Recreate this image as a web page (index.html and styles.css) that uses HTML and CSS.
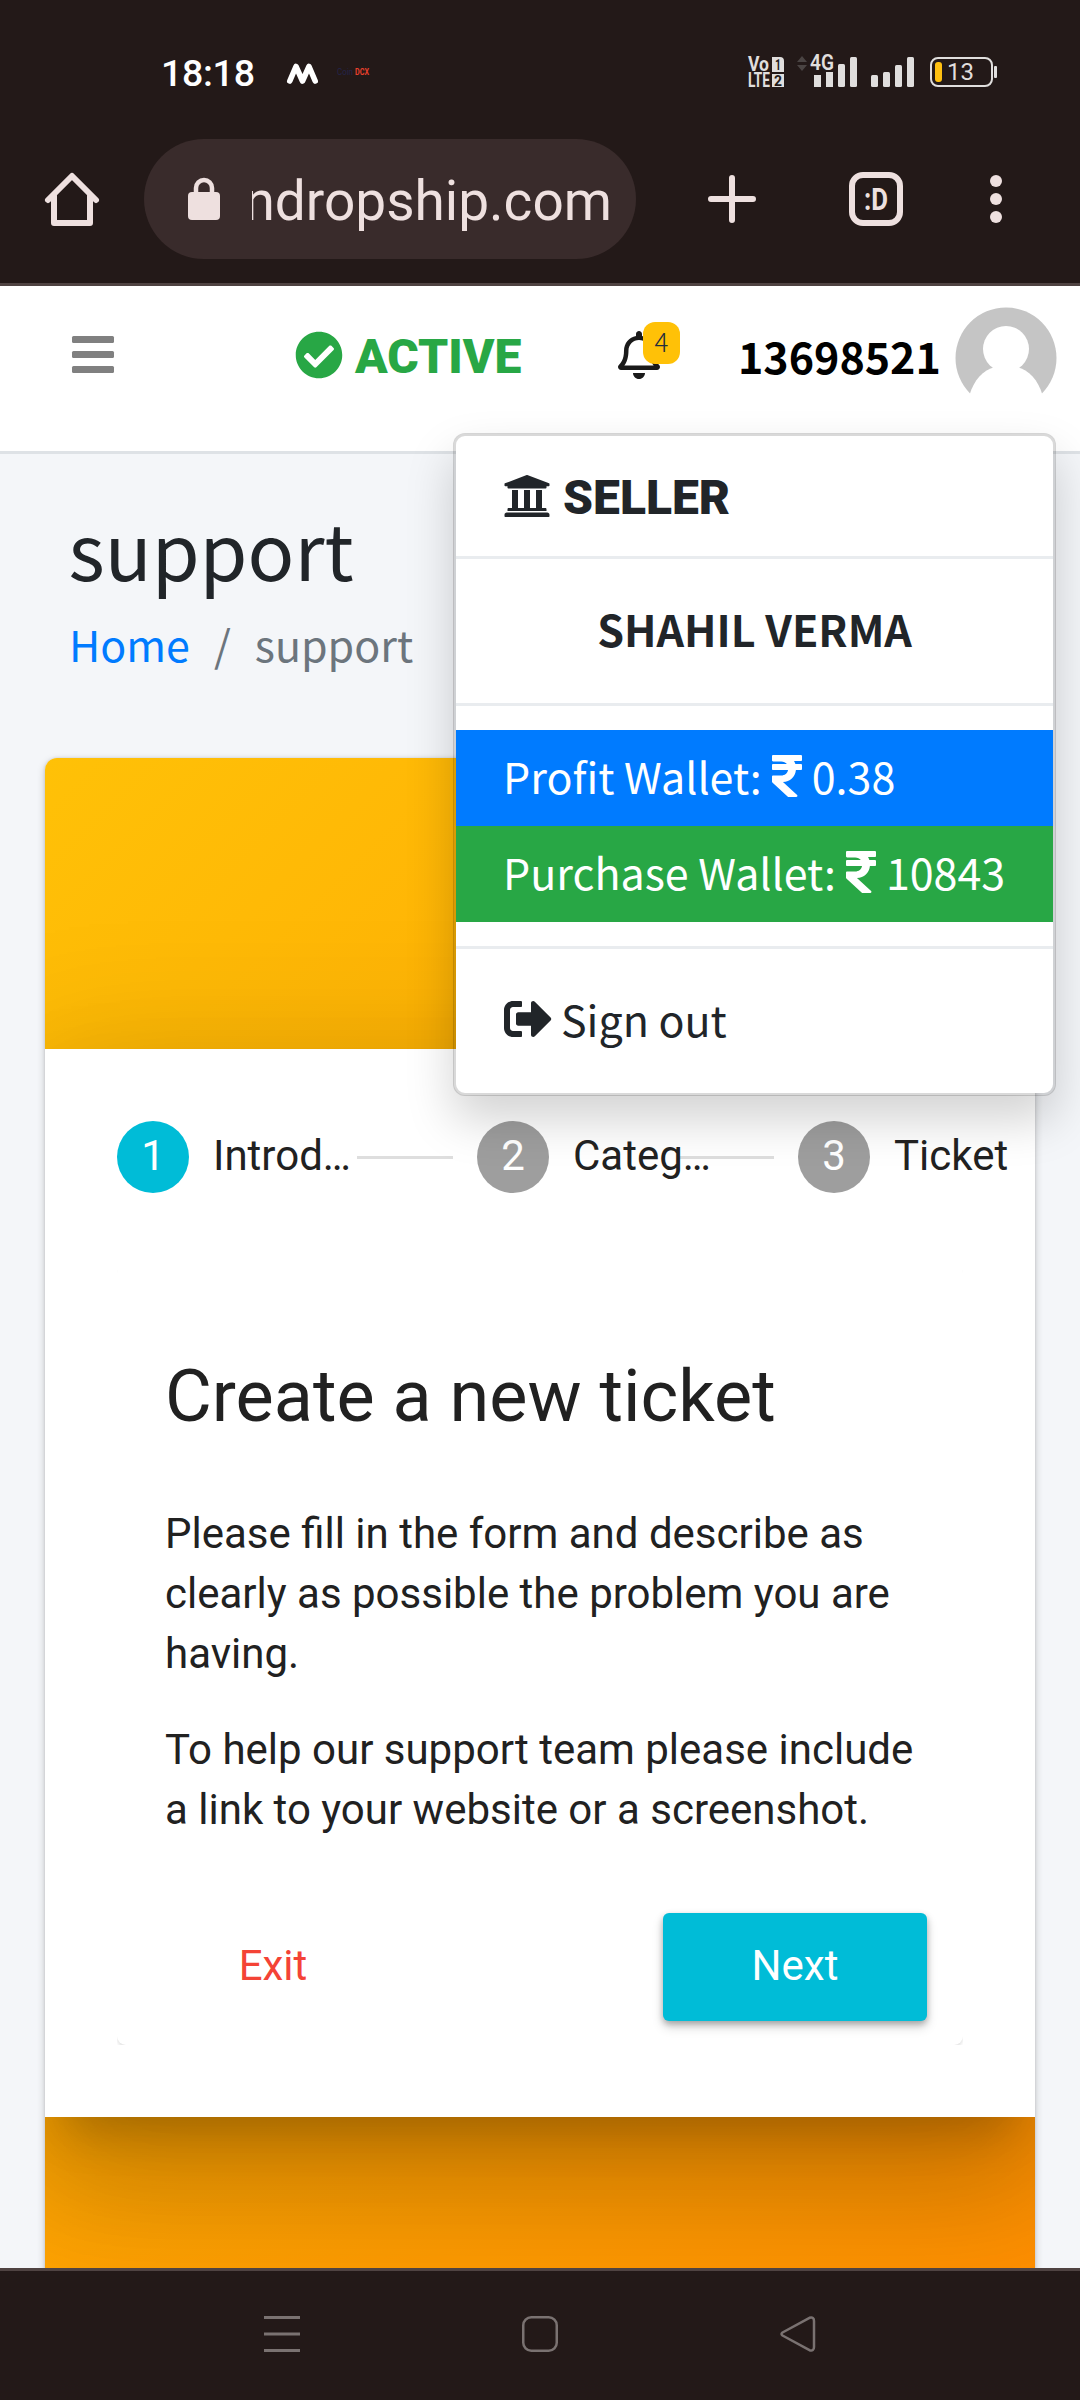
FILE: index.html
```html
<!DOCTYPE html>
<html lang="en">
<head>
<meta charset="utf-8">
<title>support</title>
<link rel="stylesheet" href="styles.css">
</head>
<body>
<header class="chrome">
  <div class="status">
    <span class="clock">18:18</span>
    <svg class="app-m" width="31" height="21" viewBox="0 0 31 21"><path d="M2.8 18 L9 3.5 L15.5 18 L22 3.5 L28.2 18" fill="none" stroke="#fff" stroke-width="5.6" stroke-linecap="round" stroke-linejoin="round"/></svg>
    <svg class="app-dcx" width="33" height="10" viewBox="0 0 33 10"><text x="0" y="8" textLength="16" lengthAdjust="spacingAndGlyphs" font-size="9" fill="#23244a">Coin</text><text x="18" y="8" textLength="14" lengthAdjust="spacingAndGlyphs" font-size="9" font-weight="700" fill="#e8402c">DCX</text></svg>
    <span class="status-right">
      <svg class="volte" width="36" height="30" viewBox="0 0 36 30" font-size="20" font-weight="700" fill="#e0dedd">
        <path d="M24 0h8q4 0 4 4v11H24zM24 17h12v13H24z"/>
        <text x="0" y="14" textLength="21" lengthAdjust="spacingAndGlyphs">Vo</text>
        <text x="0" y="30" textLength="22" lengthAdjust="spacingAndGlyphs">LTE</text>
        <text x="27" y="13" textLength="6" lengthAdjust="spacingAndGlyphs" font-size="14" fill="#231918">1</text>
        <text x="26" y="28.500" textLength="8" lengthAdjust="spacingAndGlyphs" font-size="14" fill="#231918">2</text>
      </svg>
      <svg class="updown" width="10" height="16" viewBox="0 0 10 16" fill="#4a4443"><path d="M0 6L5 0l5 6zM0 9h10l-5 6z"/></svg>
      <svg class="cell" width="47" height="34" viewBox="0 0 47 34" fill="#e0dedd"><path d="M4 22h7v12H4zM16 19h7v15h-7z"/><rect x="28" y="11" width="7" height="23" rx="1.5"/><rect x="40" y="4" width="7" height="30" rx="1.5"/><text x="0" y="17" textLength="24" lengthAdjust="spacingAndGlyphs" font-size="22" font-weight="600">4G</text></svg>
      <svg class="cell2" width="43" height="30" viewBox="0 0 43 30" fill="#e0dedd"><rect y="18" width="7" height="12" rx="1.5"/><rect x="12" y="15" width="7" height="15" rx="1.5"/><rect x="24" y="8" width="7" height="22" rx="1.5"/><rect x="36" width="7" height="30" rx="1.5"/></svg>
      <span class="battery"><span class="charge"></span>13</span><span class="nub"></span>
    </span>
  </div>
  <div class="toolbar">
    <svg class="home" width="54" height="54" viewBox="0 0 54 54" fill="none" stroke="#eee0df" stroke-width="6" stroke-linecap="round" stroke-linejoin="round"><path d="M3 28L27 4l24 24"/><path d="M9 24v27h36V24"/></svg>
    <div class="address">
      <svg width="32" height="42" viewBox="0 0 32 42"><rect y="14" width="32" height="28" rx="4" fill="#eee0df"/><path d="M8 16v-6a8 8 0 0 1 16 0v6" fill="none" stroke="#eee0df" stroke-width="4.5"/></svg>
      <div class="url"><span>ndropship.com</span></div>
    </div>
    <svg class="plus" width="48" height="48" viewBox="0 0 48 48" stroke="#eee0df" stroke-width="6" stroke-linecap="round"><path d="M24 3v42M3 24h42"/></svg>
    <svg class="tabs" width="54" height="54" viewBox="0 0 54 54"><rect x="3" y="3" width="48" height="48" rx="11" fill="none" stroke="#eee0df" stroke-width="6"/><text x="15" y="37.500" textLength="24" lengthAdjust="spacingAndGlyphs" font-size="31" font-weight="700" fill="#eee0df">:D</text></svg>
    <svg class="dots" width="12" height="48" viewBox="0 0 12 48" fill="#eee0df"><circle cx="6" cy="6" r="6"/><circle cx="6" cy="24" r="6"/><circle cx="6" cy="42" r="6"/></svg>
  </div>
</header>

<main class="page">
  <nav class="navbar">
    <svg class="burger" width="42" height="37" viewBox="0 0 42 37" fill="#808080"><rect width="42" height="7" rx="1.5"/><rect y="15" width="42" height="7" rx="1.5"/><rect y="30" width="42" height="7" rx="1.5"/></svg>
    <span class="active">
      <svg width="48" height="48" viewBox="0 0 512 512" fill="#28a745"><path d="M504 256c0 136.967-111.033 248-248 248S8 392.967 8 256 119.033 8 256 8s248 111.033 248 248zM227.314 387.314l184-184c6.248-6.248 6.248-16.379 0-22.627l-22.627-22.627c-6.248-6.249-16.379-6.249-22.628 0L216 308.118l-70.059-70.059c-6.248-6.248-16.379-6.248-22.628 0l-22.627 22.627c-6.248 6.248-6.248 16.379 0 22.627l104 104c6.249 6.249 16.379 6.249 22.628.001z"/></svg>
      <span>ACTIVE</span>
    </span>
    <span class="bell">
      <svg width="42" height="48" viewBox="0 0 448 512" fill="#1a1a1a"><path d="M439.39 362.29c-19.32-20.76-55.47-51.99-55.47-154.29 0-77.7-54.48-139.9-127.94-155.16V32c0-17.67-14.32-32-31.98-32s-31.98 14.33-31.98 32v20.84C118.56 68.1 64.08 130.3 64.08 208c0 102.3-36.15 133.53-55.47 154.29-6 6.45-8.66 14.16-8.61 21.71.11 16.4 12.98 32 32.1 32h383.8c19.12 0 32-15.6 32.1-32 .05-7.55-2.61-15.27-8.61-21.71zM67.53 368c21.22-27.97 44.42-74.33 44.53-159.42 0-.2-.06-.38-.06-.58 0-61.86 50.14-112 112-112s112 50.14 112 112c0 .2-.06.38-.06.58.11 85.1 23.31 131.46 44.53 159.42H67.53zM224 512c35.32 0 63.97-28.65 63.97-64H160.03c0 35.35 28.65 64 63.97 64z"/></svg>
      <span class="badge">4</span>
    </span>
    <span class="uid">13698521</span>
    <svg class="avatar" width="102" height="102" viewBox="0 0 102 102"><circle cx="51" cy="51" r="50.5" fill="#c5c5c5"/><circle cx="51" cy="42" r="23" fill="#fff"/><path d="M40 60C28 63 19 73 14.500 88V102h73V88C83 73 74 63 62 60z" fill="#fff"/></svg>
  </nav>

  <section class="content">
    <h1>support</h1>
    <div class="crumbs"><a>Home</a><span class="slash">/</span><span>support</span></div>
    <div class="card">
      <div class="panel">
        <div class="steps">
          <span class="num on">1</span><span class="label first">Introd…</span><span class="rule"></span>
          <span class="num">2</span><span class="label second">Categ…</span><span class="rule"></span>
          <span class="num">3</span><span class="label">Ticket</span>
        </div>
        <div class="clip">
          <div class="paper">
            <h2>Create a new ticket</h2>
            <p>Please fill in the form and describe as<br>clearly as possible the problem you are<br>having.</p>
            <p>To help our support team please include<br>a link to your website or a screenshot.</p>
            <div class="actions"><span class="btn exit">Exit</span><span class="btn next">Next</span></div>
          </div>
        </div>
      </div>
    </div>
  </section>

  <div class="menu">
    <div class="seller">
      <svg width="48" height="48" viewBox="0 0 512 512" fill="#212529"><path d="M496 128v16a8 8 0 0 1-8 8h-24v12c0 6.627-5.373 12-12 12H60c-6.627 0-12-5.373-12-12v-12H24a8 8 0 0 1-8-8v-16a8 8 0 0 1 4.941-7.392l232-88a7.996 7.996 0 0 1 6.118 0l232 88A8 8 0 0 1 496 128zm-24 304H40c-13.255 0-24 10.745-24 24v16a8 8 0 0 0 8 8h464a8 8 0 0 0 8-8v-16c0-13.255-10.745-24-24-24zM96 192v192H60c-6.627 0-12 5.373-12 12v20h416v-20c0-6.627-5.373-12-12-12h-36V192h-64v192h-64V192h-64v192h-64V192H96z"/></svg>
      <span>SELLER</span>
    </div>
    <div class="name">SHAHIL VERMA</div>
    <div class="wallets">
      <div class="wallet profit">Profit Wallet:<svg width="30" height="48" viewBox="0 0 320 512" fill="#fff"><path d="M308 96c6.627 0 12-5.373 12-12V44c0-6.627-5.373-12-12-12H12C5.373 32 0 37.373 0 44v44.748c0 6.627 5.373 12 12 12h85.280c27.308 0 48.261 9.958 60.970 27.252H12c-6.627 0-12 5.373-12 12v40c0 6.627 5.373 12 12 12h158.757c-6.217 36.086-32.961 58.632-74.757 58.632H12c-6.627 0-12 5.373-12 12v53.012c0 3.349 1.400 6.546 3.861 8.818l165.052 152.356a12.001 12.001 0 0 0 8.139 3.182h82.562c10.924 0 16.166-13.408 8.139-20.818L116.871 319.906c76.499-2.340 131.144-53.395 138.318-127.906H308c6.627 0 12-5.373 12-12v-40c0-6.627-5.373-12-12-12h-58.690c-3.486-11.541-8.280-22.246-14.252-32H308z"/></svg>0.38</div>
      <div class="wallet purchase">Purchase Wallet:<svg width="30" height="48" viewBox="0 0 320 512" fill="#fff"><path d="M308 96c6.627 0 12-5.373 12-12V44c0-6.627-5.373-12-12-12H12C5.373 32 0 37.373 0 44v44.748c0 6.627 5.373 12 12 12h85.280c27.308 0 48.261 9.958 60.970 27.252H12c-6.627 0-12 5.373-12 12v40c0 6.627 5.373 12 12 12h158.757c-6.217 36.086-32.961 58.632-74.757 58.632H12c-6.627 0-12 5.373-12 12v53.012c0 3.349 1.400 6.546 3.861 8.818l165.052 152.356a12.001 12.001 0 0 0 8.139 3.182h82.562c10.924 0 16.166-13.408 8.139-20.818L116.871 319.906c76.499-2.340 131.144-53.395 138.318-127.906H308c6.627 0 12-5.373 12-12v-40c0-6.627-5.373-12-12-12h-58.690c-3.486-11.541-8.280-22.246-14.252-32H308z"/></svg>10843</div>
    </div>
    <div class="signout">
      <svg width="48" height="48" viewBox="0 0 512 512" fill="#212529"><path d="M497 273L329 441c-15 15-41 4.500-41-17v-96H152c-13.300 0-24-10.700-24-24v-96c0-13.300 10.700-24 24-24h136V88c0-21.400 25.900-32 41-17l168 168c9.300 9.400 9.300 24.600 0 34zM192 436v-40c0-6.600-5.400-12-12-12H96c-17.700 0-32-14.300-32-32V160c0-17.700 14.300-32 32-32h84c6.600 0 12-5.400 12-12V76c0-6.600-5.400-12-12-12H96c-53 0-96 43-96 96v192c0 53 43 96 96 96h84c6.600 0 12-5.400 12-12z"/></svg>
      Sign out
    </div>
  </div>
</main>

<footer class="sysnav">
  <svg width="36" height="36" viewBox="0 0 36 36" stroke="#7a7271" stroke-width="3"><path d="M0 1.500h36M0 18h36M0 34.500h36"/></svg>
  <svg width="36" height="36" viewBox="0 0 36 36" fill="none" stroke="#7a7271" stroke-width="2.500"><rect x="1.250" y="1.250" width="33.500" height="33.500" rx="8"/></svg>
  <svg width="36" height="36" viewBox="0 0 36 36" fill="none" stroke="#7a7271" stroke-width="2.500" stroke-linejoin="round"><path d="M2.500 16.500L29.500 1.800Q34 0.500 34 5V31Q34 35.500 29.500 34.200L2.500 19.500Q0.500 18 2.500 16.500z"/></svg>
</footer>
</body>
</html>
```
FILE: styles.css
```css
* { box-sizing: border-box; }
body {
  margin: 0;
  width: 1080px;
  height: 2400px;
  overflow: hidden;
  display: flex;
  flex-direction: column;
  background: #231918;
  color: #212529;
  font: 42.97px/72px "Noto Sans CJK SC", "Noto Sans", sans-serif;
}
svg { display: block; flex: none; overflow: visible; }

/* browser chrome */
.chrome {
  height: 286px;
  flex: none;
  border-bottom: 3px solid #4f4342;
  padding-top: 42px;
  font-family: Roboto, sans-serif;
}
.status { display: flex; align-items: center; height: 60px; padding-left: 161px; color: #fff; }
.clock { font-size: 37.5px; line-height: 60px; font-weight: 500; letter-spacing: -.3px; width: 126px; padding-top: 1px; }
.app-m { margin-top: 2px; }
.app-dcx { margin-left: 19px; }
.status-right { display: flex; align-items: center; margin-left: auto; padding-right: 83px; color: #e0dedd; }
.updown { margin: -16px 0 0 13px; }
.cell { margin: -4px 0 0 3px; }
.cell2 { margin-left: 14px; }
.battery { width: 63px; height: 30px; margin-left: 16px; border: 2px solid #e0dedd; border-radius: 8px; display: flex; align-items: center; padding-left: 3px; font-size: 24px; line-height: 26px; gap: 5px; }
.charge { width: 7px; height: 20px; border-radius: 3px; background: #ffc011; }
.nub { width: 3px; height: 12px; margin-left: 1px; background: #e0dedd; border-radius: 1px; }

.toolbar { display: flex; align-items: center; height: 120px; margin-top: 37px; padding-left: 45px; color: #eee0df; }
.address { width: 492px; height: 120px; margin-left: 45px; border-radius: 60px; background: #392b2b; display: flex; align-items: center; padding: 0 24px 0 44px; }
.url { width: 360px; margin-left: 32px; overflow: hidden; display: flex; justify-content: flex-end; flex: none; font-size: 55px; line-height: 80px; padding-top: 4px; }
.plus { margin-left: 72px; }
.tabs { margin-left: 93px; }
.dots { margin-left: 87px; }

/* page */
.page { position: relative; flex: none; height: 1982px; overflow: hidden; background: #f4f6f9; }
.navbar { display: flex; align-items: flex-start; height: 168px; padding: 21px 0 0 72px; background: #fff; border-bottom: 3px solid #dee2e6; }
.burger { margin-top: 29px; }
.active { display: flex; align-items: center; gap: 12px; width: 323px; margin: 22.500px 0 0 181px; font: 900 48px/48px Roboto, sans-serif; color: #28a745; }
.active span, .seller span { padding-top: 3px; }
.bell { position: relative; width: 42px; margin-top: 24px; }
.badge { position: absolute; left: 25px; top: -9px; width: 37px; height: 42px; border-radius: 12px; background: #ffc107; color: #1f2d3d; font-size: 26px; font-weight: 300; line-height: 38px; text-align: center; }
.uid { margin: 12px 0 0 78px; width: 217px; font-weight: 700; color: #000; }
.avatar { flex: none; }

.content { padding: 41px 45px 0; }
h1 { margin: 0 0 8px; padding-left: 23.500px; font-size: 77.35px; line-height: 104px; font-weight: 400; }
.crumbs { display: flex; padding-left: 24px; color: #6c757d; }
.crumbs a { color: #007bff; }
.slash { margin: 0 24px; }
.card { height: 1560px; margin-top: 79px; padding-top: 291px; overflow: hidden; border-radius: 12px; background: linear-gradient(135deg, #ffc107, #ff8f00); box-shadow: 0 0 3px rgba(0,0,0,.125), 0 3px 9px rgba(0,0,0,.2); font-family: Roboto, sans-serif; color: #212121; }
.panel { height: 1068px; padding: 72px; background: #fff; box-shadow: 0 33px 45px -21px rgba(0,0,0,.2), 0 72px 114px 9px rgba(0,0,0,.14), 0 27px 138px 24px rgba(0,0,0,.12); }
.steps { display: flex; align-items: center; height: 72px; font-size: 42px; line-height: 72px; }
.steps > * { flex: none; }
.num { width: 72px; height: 72px; border-radius: 50%; background: #9e9e9e; color: #fff; text-align: center; line-height: 70px; margin-right: 24px; }
.num.on { background: #00bcd7; }
.label { white-space: nowrap; position: relative; z-index: 1; line-height: 68px; padding-bottom: 2px; }
.first { width: 144px; }
.second { width: 105px; }
.rule { width: 96px; height: 3px; margin-right: 24px; background: #dedede; }
.clip { margin-top: 72px; height: 780px; overflow: hidden; }
.paper { height: 780px; padding: 84px 36px 0 48px; border-radius: 9px; background: #fff; box-shadow: 0 3px 3px rgba(0,0,0,.1); }
h2 { margin: 0 0 59px; font-size: 72px; line-height: 96px; font-weight: 400; }
p { margin: 0 0 36px; font-size: 42px; line-height: 60px; }
.actions { display: flex; justify-content: space-between; margin-top: 73px; }
.btn { height: 108px; font-size: 42px; line-height: 106px; text-align: center; border-radius: 6px; }
.exit { width: 216px; color: #f44336; }
.next { width: 264px; color: #fff; background: #00bcd7; box-shadow: 0 3px 6px rgba(0,0,0,.26), 0 6px 12px rgba(0,0,0,.16); }

/* account menu */
.menu { position: absolute; left: 453px; top: 147px; width: 603px; border: 3px solid rgba(0,0,0,.15); border-radius: 12px; background: #fff; background-clip: padding-box; box-shadow: 0 24px 48px rgba(0,0,0,.175); }
.seller { display: flex; align-items: center; gap: 12px; height: 123px; padding-left: 47px; border-bottom: 3px solid #e9ecef; font: 900 48px/60px Roboto, sans-serif; }
.name { height: 147px; border-bottom: 3px solid #e9ecef; text-align: center; font-weight: 700; line-height: 138px; }
.wallets { padding: 24px 0; border-bottom: 3px solid #e9ecef; }
.wallet { display: flex; align-items: center; height: 96px; padding: 0 0 6px 47px; color: #fff; line-height: 88px; }
.wallet svg { margin: 2px 10px 0; }
.profit { background: #007bff; }
.purchase { background: #28a745; }
.signout { display: flex; align-items: center; gap: 9px; height: 144px; padding: 0 0 6px 48px; line-height: 136px; }
.signout svg { margin-top: 2px; }

/* system navigation */
.sysnav { flex: none; height: 132px; border-top: 3px solid #4f4342; display: flex; justify-content: space-between; padding: 45px 264px 0; }
```
